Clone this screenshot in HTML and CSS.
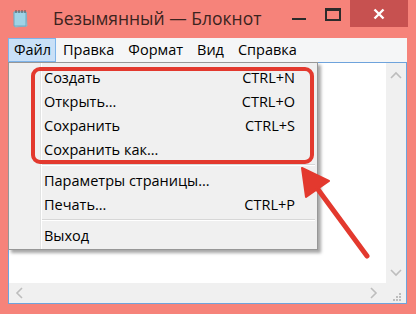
FILE: index.html
```html
<!DOCTYPE html>
<html lang="ru">
<head>
  <meta charset="UTF-8">
  <title>Безымянный — Блокнот</title>
  <link rel="stylesheet" href="styles.css">
</head>
<body>
  <div class="okno">
    <!-- заголовок окна -->
    <div class="zagolovok">
      <svg class="ikonka" width="18" height="19" viewBox="0 0 18 19">
        <path d="M3 3 L15 3 L16 17 L4 18 Z" fill="#d8eef6" stroke="#8fb7c9" stroke-width="1"/>
        <rect x="3" y="3" width="12" height="14" fill="#9fd3e6"/>
        <path d="M3 3 L15 3 L15 17 L3 17 Z" fill="none" stroke="#6ea8c0" stroke-width="1"/>
        <g stroke="#555" stroke-width="1">
          <line x1="5" y1="1" x2="5" y2="4"/>
          <line x1="8" y1="1" x2="8" y2="4"/>
          <line x1="11" y1="1" x2="11" y2="4"/>
          <line x1="14" y1="1" x2="14" y2="4"/>
        </g>
      </svg>
      <span class="nazvanie">Безымянный — Блокнот</span>
      <div class="knopki">
        <span class="svernut"></span>
        <span class="razvernut"></span>
        <span class="zakryt">
          <svg width="12" height="12" viewBox="0 0 12 12">
            <path d="M1.5 1.5 L10.5 10.5 M10.5 1.5 L1.5 10.5" stroke="#fff" stroke-width="2.4"/>
          </svg>
        </span>
      </div>
    </div>

    <div class="klient">
      <div class="menyu">
        <span class="punkt aktivnyj">Файл</span>
        <span class="punkt">Правка</span>
        <span class="punkt">Формат</span>
        <span class="punkt">Вид</span>
        <span class="punkt">Справка</span>
      </div>
      <div class="redaktor">
        <div class="tekst"></div>
        <div class="skroll-v">
          <svg width="12" height="8" viewBox="0 0 12 8"><path d="M1 7 L6 2 L11 7" fill="none" stroke="#bdbdbd" stroke-width="1.6"/></svg>
          <svg width="12" height="8" viewBox="0 0 12 8"><path d="M1 1 L6 6 L11 1" fill="none" stroke="#bdbdbd" stroke-width="1.6"/></svg>
        </div>
        <div class="skroll-g">
          <svg width="8" height="12" viewBox="0 0 8 12"><path d="M7 1 L2 6 L7 11" fill="none" stroke="#bdbdbd" stroke-width="1.6"/></svg>
          <svg width="8" height="12" viewBox="0 0 8 12"><path d="M1 1 L6 6 L1 11" fill="none" stroke="#bdbdbd" stroke-width="1.6"/></svg>
        </div>
        <div class="ugol">
          <svg width="10" height="10" viewBox="0 0 10 10" fill="#bdbdbd">
            <rect x="7" y="1" width="2" height="2"/>
            <rect x="4" y="4" width="2" height="2"/><rect x="7" y="4" width="2" height="2"/>
            <rect x="1" y="7" width="2" height="2"/><rect x="4" y="7" width="2" height="2"/><rect x="7" y="7" width="2" height="2"/>
          </svg>
        </div>
      </div>
    </div>

    <!-- выпадающее меню Файл -->
    <div class="spisok">
      <div class="stroka"><span>Создать</span><span>CTRL+N</span></div>
      <div class="stroka"><span>Открыть...</span><span>CTRL+O</span></div>
      <div class="stroka"><span>Сохранить</span><span>CTRL+S</span></div>
      <div class="stroka"><span>Сохранить как...</span><span></span></div>
      <div class="razdelitel"></div>
      <div class="stroka"><span>Параметры страницы...</span><span></span></div>
      <div class="stroka"><span>Печать...</span><span>CTRL+P</span></div>
      <div class="razdelitel"></div>
      <div class="stroka"><span>Выход</span><span></span></div>
    </div>

    <div class="ramka"></div>

    <svg class="strelka" width="416" height="314" viewBox="0 0 416 314">
      <line x1="367" y1="256" x2="314" y2="184" stroke="#e3392e" stroke-width="5" stroke-linecap="round"/>
      <polygon points="302,168 329,181 306,197" fill="#e3392e" stroke="#e3392e" stroke-width="2" stroke-linejoin="round"/>
    </svg>
  </div>
</body>
</html>
```

FILE: styles.css
```css
body {
  margin: 0;
  font-family: "Open Sans", "Noto Sans", sans-serif;
}

.okno {
  position: relative;
  width: 416px;
  height: 314px;
  background: #f6837a;
  display: flex;
  flex-direction: column;
  overflow: hidden;
}

.zagolovok {
  height: 38px;
  display: flex;
  align-items: flex-start;
}

.ikonka {
  margin: 9px 0 0 11px;
}

.nazvanie {
  margin: 6px 0 0 24px;
  font-size: 17.5px;
  color: #3b2320;
  flex: 1;
}

.knopki {
  display: flex;
  align-items: flex-start;
}

.svernut {
  width: 14px;
  height: 2px;
  background: #2b2b2b;
  margin: 18px 19px 0 0;
}

.razvernut {
  width: 12px;
  height: 8px;
  border: 2px solid #2b2b2b;
  border-top-width: 3px;
  margin: 8px 9px 0 0;
}

.zakryt {
  width: 58px;
  height: 27px;
  background: #c75150;
  display: flex;
  align-items: center;
  justify-content: center;
  margin-right: 8px;
}

.klient {
  flex: 1;
  margin: 0 9px 10px 8px;
  display: flex;
  flex-direction: column;
}

.menyu {
  height: 24px;
  background: #f5f6f7;
  display: flex;
  font-size: 14.5px;
  color: #000;
}

.punkt {
  padding: 0 7px;
  line-height: 24px;
}

.punkt.aktivnyj {
  background: #c9e0f7;
  border: 1px solid #7eb4ea;
  line-height: 22px;
  padding: 0 5px;
  width: 36px;
}

.redaktor {
  flex: 1;
  border: 1px solid #6ea3dc;
  background: #fff;
  display: grid;
  grid-template-columns: 1fr 20px;
  grid-template-rows: 1fr 20px;
}

.skroll-v {
  background: #f0f0f0;
  display: flex;
  flex-direction: column;
  justify-content: space-between;
  align-items: center;
  padding: 8px 0 6px;
}

.skroll-g {
  background: #f0f0f0;
  display: flex;
  justify-content: space-between;
  align-items: center;
  padding: 0 8px 0 6px;
}

.ugol {
  background: #f0f0f0;
  display: flex;
  align-items: flex-end;
  justify-content: flex-end;
  padding: 0 4px 1px 0;
}

/* выпадающее меню поверх окна */
.spisok {
  position: absolute;
  left: 8px;
  top: 62px;
  width: 308px;
  padding: 2px 0 2px;
  background: #f0f0f0 linear-gradient(to right, transparent 31px, #e2e3e3 31px, #e2e3e3 32px, #fff 32px, #fff 33px, transparent 33px);
  border: 1px solid #979797;
  box-shadow: 3px 3px 3px rgba(0, 0, 0, 0.35);
  font-size: 14.5px;
  color: #000;
}

.stroka {
  height: 24px;
  display: flex;
  justify-content: space-between;
  align-items: center;
  padding: 0 22px 0 35px;
}

.razdelitel {
  height: 1px;
  background: #d7d7d7;
  margin: 3px 2px 2px 33px;
  border-bottom: 1px solid #fff;
}

.ramka {
  position: absolute;
  left: 31px;
  top: 67px;
  width: 275px;
  height: 89px;
  border: 4px solid #e3392e;
  border-radius: 9px;
}

.strelka {
  position: absolute;
  left: 0;
  top: 0;
}
```
